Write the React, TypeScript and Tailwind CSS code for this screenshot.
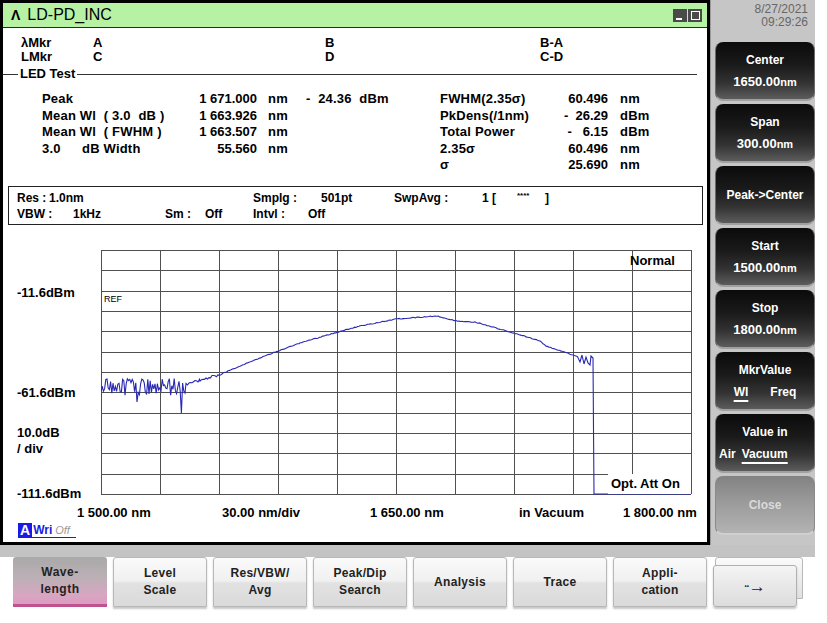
import React from "react";

// ---- trace data (page coords -> chart coords) ----
const GX = 101;
const GY = 249;

const buildTrace = () => {
  let s = 98765;
  const rnd = () => {
    s = (s * 1103515245 + 12345) & 0x7fffffff;
    return s / 0x7fffffff;
  };
  const pts: string[] = [];
  const add = (x: number, y: number) =>
    pts.push(`${(x - GX).toFixed(1)},${(y - GY).toFixed(1)}`);

  // noisy floor
  for (let x = 101; x < 186; x += 1.2) {
    let y = 386 + (rnd() - 0.5) * 17;
    if (Math.abs(x - 137) < 0.7) y = 401;
    if (Math.abs(x - 181.5) < 0.7) y = 412;
    add(x, y);
  }

  const knots: [number, number][] = [
    [186, 383], [200, 379], [219, 374], [240, 365], [260, 357], [278, 350],
    [300, 342], [338, 331], [360, 325], [396, 318], [437, 315], [456, 320],
    [475, 321], [514, 332], [540, 340], [546, 345], [573, 354], [578, 356],
  ];
  for (let i = 0; i < knots.length - 1; i++) {
    const [x0, y0] = knots[i];
    const [x1, y1] = knots[i + 1];
    for (let x = x0; x < x1; x += 1.5) {
      const t = (x - x0) / (x1 - x0);
      const amp = x < 222 ? 3 : 0.8;
      add(x, y0 + (y1 - y0) * t + (rnd() - 0.5) * amp);
    }
  }

  const tail: [number, number][] = [
    [580, 361], [582, 354], [584, 363], [586, 356], [588, 362], [590, 364],
    [591, 355], [593, 357], [593.5, 428], [594, 493], [691, 493],
  ];
  tail.forEach(([x, y]) => add(x, y));
  return pts.join(" ");
};

const TRACE = buildTrace();

const Chart = () => {
  const cols = Array.from({ length: 11 }, (_, i) => i * 59);
  const rows = Array.from({ length: 13 }, (_, i) => Math.round(i * 20.33));
  return (
    <div className="relative w-[592px] h-[245px]">
      <svg width={592} height={246} className="block">
        {rows.map((y) => (
          <line key={"r" + y} x1={0} y1={y + 0.5} x2={590} y2={y + 0.5} stroke="#505050" strokeWidth={1} />
        ))}
        {cols.map((x) => (
          <line key={"c" + x} x1={x + 0.5} y1={0} x2={x + 0.5} y2={244} stroke="#505050" strokeWidth={1} />
        ))}
        <polyline points={TRACE} fill="none" stroke="#2828b4" strokeWidth={1.1} />
      </svg>
      <span className="absolute left-[3px] top-[44px] text-[9px] leading-[10px]">REF</span>
      <span className="absolute left-[529px] top-[4px] text-[13px] font-bold leading-[14px]">Normal</span>
      <div className="absolute left-[507px] top-[224px] w-[83px] h-[20px] bg-white flex items-center pl-[3px] text-[13px] font-bold">
        Opt. Att On
      </div>
    </div>
  );
};

const leftRows = [
  { label: "Peak", value: "1 671.000", unit: "nm", extra: "-  24.36  dBm" },
  { label: "Mean Wl  ( 3.0  dB )", value: "1 663.926", unit: "nm" },
  { label: "Mean Wl  ( FWHM )", value: "1 663.507", unit: "nm" },
  { label: "3.0", label2: "dB Width", value: "55.560", unit: "nm" },
];

const rightRows = [
  { label: "FWHM(2.35σ)", value: "60.496", unit: "nm" },
  { label: "PkDens(/1nm)", value: "-  26.29", unit: "dBm" },
  { label: "Total Power", value: "-   6.15", unit: "dBm" },
  { label: "2.35σ", value: "60.496", unit: "nm" },
  { label: "σ", value: "25.690", unit: "nm" },
];

const MainWindow = () => (
  <div className="w-[710px] h-[545px] border-t-[3px] border-l-[3px] border-r-[3px] border-b-[3px] border-black flex flex-col bg-white">
    {/* title bar */}
    <div className="h-[25px] bg-[#b6f1a4] border-b border-[#2a2a2a] flex items-center pl-[8px] pr-[5px]">
      <span className="text-[14px] font-bold leading-none">Λ</span>
      <span className="ml-[7px] text-[16px] leading-none">LD-PD_INC</span>
      <div className="ml-auto flex gap-[1px]">
        <div className="w-[14px] h-[13px] bg-[#4a4a4a] flex items-end pl-[3px] pb-[2px]">
          <div className="w-[6px] h-[2px] bg-white" />
        </div>
        <div className="w-[14px] h-[13px] bg-[#4a4a4a] flex items-center justify-center">
          <div className="w-[9px] h-[9px] border border-white" />
        </div>
      </div>
    </div>

    {/* markers */}
    <div className="mt-[8px] text-[13px] font-bold leading-[14px]">
      <div className="flex">
        <span className="w-[90px] pl-[18px]">λMkr</span>
        <span className="w-[232px]">A</span>
        <span className="w-[215px]">B</span>
        <span>B-A</span>
      </div>
      <div className="flex">
        <span className="w-[90px] pl-[18px]">LMkr</span>
        <span className="w-[232px]">C</span>
        <span className="w-[215px]">D</span>
        <span>C-D</span>
      </div>
    </div>

    {/* LED Test */}
    <div className="mt-[3px] h-[14px] flex items-center pr-[10px]">
      <div className="w-[15px] h-px bg-[#333]" />
      <span className="px-[2px] text-[13px] font-bold leading-[14px]">LED Test</span>
      <div className="flex-1 h-px bg-[#333]" />
    </div>

    {/* measurements */}
    <div className="mt-[10px] flex text-[13px] font-bold leading-[16.5px] tracking-[0.2px]">
      <div className="w-[437px] pl-[39px]">
        {leftRows.map((r) => (
          <div key={r.value} className="flex whitespace-pre">
            <span className="w-[155px] flex">
              {r.label2 ? (
                <>
                  <span className="w-[40px]">{r.label}</span>
                  <span>{r.label2}</span>
                </>
              ) : (
                r.label
              )}
            </span>
            <span className="w-[60px] text-right tracking-normal">{r.value}</span>
            <span className="w-[49px] pl-[11px]">{r.unit}</span>
            {r.extra && <span>{r.extra}</span>}
          </div>
        ))}
      </div>
      <div>
        {rightRows.map((r) => (
          <div key={r.label} className="flex whitespace-pre">
            <span className="w-[100px]">{r.label}</span>
            <span className="w-[68px] text-right tracking-normal">{r.value}</span>
            <span className="pl-[12px]">{r.unit}</span>
          </div>
        ))}
      </div>
    </div>

    {/* settings box */}
    <div className="mt-[12px] ml-[5px] w-[695px] h-[39px] border border-[#222] pt-[3px] pl-[8px] text-[12px] font-bold leading-[16px] whitespace-pre">
      <div className="flex">
        <span className="w-[32px]">Res :</span>
        <span className="w-[204px]">1.0nm</span>
        <span className="w-[68px]">Smplg :</span>
        <span className="w-[73px]">501pt</span>
        <span className="w-[88px]">SwpAvg :</span>
        <span className="w-[35px]">1 [</span>
        <span className="w-[28px] text-[8px] leading-[12px]">****</span>
        <span>]</span>
      </div>
      <div className="flex">
        <span className="w-[56px]">VBW :</span>
        <span className="w-[92px]">1kHz</span>
        <span className="w-[40px]">Sm :</span>
        <span className="w-[48px]">Off</span>
        <span className="w-[55px]">Intvl :</span>
        <span>Off</span>
      </div>
    </div>

    {/* chart */}
    <div className="mt-[25px] flex h-[245px]">
      <div className="w-[98px] pl-[14px] text-[13px] font-bold leading-[14px] flex flex-col">
        <span className="mt-[36px]">-11.6dBm</span>
        <span className="mt-[86px]">-61.6dBm</span>
        <span className="mt-[26px]">10.0dB</span>
        <span className="mt-[2px]">/ div</span>
        <span className="mt-[31px]">-111.6dBm</span>
      </div>
      <Chart />
    </div>

    {/* x labels */}
    <div className="mt-[11px] flex pl-[74px] text-[13px] font-bold leading-[14px] whitespace-pre">
      <span className="w-[145px]">1 500.00 nm</span>
      <span className="w-[148px]">30.00 nm/div</span>
      <span className="w-[149px]">1 650.00 nm</span>
      <span className="w-[104px]">in Vacuum</span>
      <span>1 800.00 nm</span>
    </div>

    {/* write status */}
    <div className="mt-[3px] ml-[15px] flex items-end border-b border-[#333] w-fit pr-[6px] leading-[14px]">
      <span className="bg-[#1a1ae6] text-white text-[14px] font-bold px-[2px] leading-[14px]">A</span>
      <span className="text-[#1a1ae6] text-[12px] font-bold ml-[1px]">Wri</span>
      <span className="text-[#9a9a9a] text-[11px] italic ml-[3px]">Off</span>
    </div>
  </div>
);

const SoftKey = ({
  title,
  value,
  unit,
  children,
  disabled,
}: {
  title?: string;
  value?: string;
  unit?: string;
  children?: React.ReactNode;
  disabled?: boolean;
}) => (
  <div
    className={
      disabled
        ? "h-[59px] rounded-[8px] bg-[linear-gradient(to_bottom,#828282_0%,#9a9a9a_45%,#b3b3b3_100%)] border-x border-[#8a8a8a] border-b-2 border-b-[#d0d0d0] flex flex-col items-center justify-center text-[#dadada] text-[12px] font-bold"
        : "h-[59px] rounded-[8px] bg-[linear-gradient(to_bottom,#0b0b0b_0%,#1a1a1a_40%,#333_72%,#5c5c5c_100%)] border-x border-[#6a6a6a] border-b-2 border-b-[#a0a0a0] flex flex-col items-center justify-center text-white text-[12px] font-bold"
    }
  >
    {children ?? (
      <>
        <span className="leading-[14px]">{title}</span>
        {value && (
          <span className="mt-[8px] leading-[14px] text-[13px]">
            {value}
            <span className="text-[11px]">{unit}</span>
          </span>
        )}
      </>
    )}
  </div>
);

const SidePanel = () => (
  <div className="w-[105px] h-[545px] bg-[#c6c6c6] border-l border-[#9a9a9a] pl-[4px] flex flex-col">
    <div className="h-[39px] pt-[3px] text-right text-[12px] leading-[13px] text-[#666]">
      <div className="pr-[7px]">8/27/2021</div>
      <div className="pr-[7px]">09:29:26</div>
    </div>
    <div className="mt-[3px] flex flex-col gap-[3px]">
      <SoftKey title="Center" value="1650.00" unit="nm" />
      <SoftKey title="Span" value="300.00" unit="nm" />
      <SoftKey title="Peak->Center" />
      <SoftKey title="Start" value="1500.00" unit="nm" />
      <SoftKey title="Stop" value="1800.00" unit="nm" />
      <SoftKey>
        <span className="leading-[14px]">MkrValue</span>
        <div className="mt-[8px] flex gap-[22px] leading-[14px]">
          <span className="underline underline-offset-[4px] decoration-2">Wl</span>
          <span>Freq</span>
        </div>
      </SoftKey>
      <SoftKey>
        <span className="leading-[14px]">Value in</span>
        <div className="mt-[8px] flex gap-[6px] leading-[14px] self-stretch pl-[3px]">
          <span>Air</span>
          <span className="underline underline-offset-[4px] decoration-2">Vacuum</span>
        </div>
      </SoftKey>
      <SoftKey title="Close" disabled />
    </div>
  </div>
);

const tabs = [
  ["Wave-", "length"],
  ["Level", "Scale"],
  ["Res/VBW/", "Avg"],
  ["Peak/Dip", "Search"],
  ["Analysis"],
  ["Trace"],
  ["Appli-", "cation"],
];

const TabBar = () => (
  <div className="flex gap-[6px] pl-[13px]">
    {tabs.map((t, i) => (
      <div
        key={t[0]}
        className={
          i === 0
            ? "w-[94px] h-[50px] rounded-t-[3px] bg-[linear-gradient(to_bottom,#a9a9a9_0%,#bcb0b6_45%,#d8a6c2_80%,#dc9cc0_100%)] border-b-[3px] border-[#c0508e] flex flex-col items-center justify-center text-[12px] font-bold tracking-[0.5px] text-[#222] leading-[17px]"
            : "w-[94px] h-[50px] rounded-t-[3px] bg-[linear-gradient(to_bottom,#fafafa_0%,#f0f0f0_48%,#e2e2e2_52%,#dadada_100%)] border border-[#b8b8b8] shadow-[0_2px_2px_#c8c8c8] flex flex-col items-center justify-center text-[12px] font-bold tracking-[0.3px] text-[#222] leading-[17px]"
        }
      >
        {t.map((line) => (
          <span key={line}>{line}</span>
        ))}
      </div>
    ))}
    <div className="relative w-[90px] h-[50px]">
      <div className="absolute left-[2px] top-0 w-[88px] h-[42px] rounded-t-[3px] bg-[linear-gradient(to_bottom,#fafafa,#e0e0e0)] border border-[#b8b8b8]" />
      <div className="absolute left-0 top-[8px] w-[84px] h-[42px] rounded-[3px] bg-[linear-gradient(to_bottom,#f4f4f4,#dcdcdc)] border border-[#b0b0b0] shadow-[0_2px_2px_#c8c8c8] flex items-center justify-center font-bold text-[#222]">
        <span className="text-[10px] tracking-[-1px]">··</span>
        <span className="text-[17px] leading-none">→</span>
      </div>
    </div>
  </div>
);

export default function App() {
  return (
    <div className="w-[827px] h-[623px] bg-white font-['Liberation_Sans',Arial,sans-serif] text-black overflow-hidden">
      <div className="flex">
        <MainWindow />
        <SidePanel />
      </div>
      <div className="h-[12px] w-[815px] bg-[#c3c3c3]" />
      <TabBar />
    </div>
  );
}
